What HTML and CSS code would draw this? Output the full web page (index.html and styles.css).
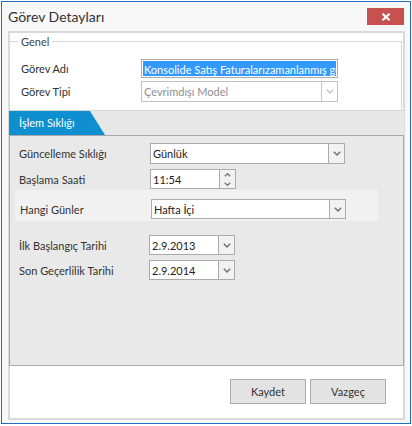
FILE: index.html
```html
<!DOCTYPE html>
<html lang="tr">
<head>
<meta charset="utf-8">
<title>Görev Detayları</title>
<link rel="stylesheet" href="styles.css">
</head>
<body>
<div class="window">
  <div class="titlebar">
    <span class="title">Görev Detayları</span>
    <button class="close" aria-label="Kapat"><svg width="10" height="8" viewBox="0 0 10 8"><path d="M1.5 0.8 L8.5 7.2 M8.5 0.8 L1.5 7.2" stroke="#fff" stroke-width="2.2" fill="none"/></svg></button>
  </div>
  <div class="panel">
    <div class="group">
      <div class="group-title">Genel</div>
      <div class="g-row r-name">
        <label>Görev Adı</label>
        <div class="field text"><span class="sel">Konsolide Satış Faturalarızamanlanmış gönderimi</span></div>
      </div>
      <div class="g-row r-type">
        <label>Görev Tipi</label>
        <div class="field combo disabled"><span class="val">Çevrimdışı Model</span><span class="btn"><svg width="8" height="5" viewBox="0 0 8 5"><path d="M0.8 0.8 L4 4 L7.2 0.8" stroke="#c4c4c4" stroke-width="1.4" fill="none"/></svg></span></div>
      </div>
    </div>
    <div class="tabs">
      <div class="tabstrip"><div class="tab">İşlem Sıklığı</div></div>
      <div class="tabpage">
        <div class="t-row r1">
          <label>Güncelleme Sıklığı</label>
          <div class="field combo wide"><span class="val">Günlük</span><span class="btn"><svg width="8" height="5" viewBox="0 0 8 5"><path d="M0.8 0.8 L4 4 L7.2 0.8" stroke="#6e6e6e" stroke-width="1.4" fill="none"/></svg></span></div>
        </div>
        <div class="t-row r2">
          <label>Başlama Saati</label>
          <div class="field spin short"><span class="val">11:54</span><span class="btn spinbtn"><span class="half"><svg width="7" height="4" viewBox="0 0 7 4"><path d="M0.7 3.3 L3.5 0.7 L6.3 3.3" stroke="#777" stroke-width="1.3" fill="none"/></svg></span><span class="half"><svg width="7" height="4" viewBox="0 0 7 4"><path d="M0.7 0.7 L3.5 3.3 L6.3 0.7" stroke="#777" stroke-width="1.3" fill="none"/></svg></span></span></div>
        </div>
        <div class="t-row band">
          <label>Hangi Günler</label>
          <div class="field combo wide"><span class="val">Hafta İçi</span><span class="btn"><svg width="8" height="5" viewBox="0 0 8 5"><path d="M0.8 0.8 L4 4 L7.2 0.8" stroke="#6e6e6e" stroke-width="1.4" fill="none"/></svg></span></div>
        </div>
        <div class="t-row r4 date">
          <label>İlk Başlangıç Tarihi</label>
          <div class="field combo short"><span class="val">2.9.2013</span><span class="btn"><svg width="8" height="5" viewBox="0 0 8 5"><path d="M0.8 0.8 L4 4 L7.2 0.8" stroke="#6e6e6e" stroke-width="1.4" fill="none"/></svg></span></div>
        </div>
        <div class="t-row r5 date">
          <label>Son Geçerlilik Tarihi</label>
          <div class="field combo short"><span class="val">2.9.2014</span><span class="btn"><svg width="8" height="5" viewBox="0 0 8 5"><path d="M0.8 0.8 L4 4 L7.2 0.8" stroke="#6e6e6e" stroke-width="1.4" fill="none"/></svg></span></div>
        </div>
      </div>
    </div>
    <div class="footer">
      <button class="action">Kaydet</button>
      <button class="action">Vazgeç</button>
    </div>
  </div>
</div>
</body>
</html>
```

FILE: styles.css
```css
* { box-sizing: border-box; }
html, body { margin: 0; padding: 0; }
body {
  background: #ffffff;
  font-family: "Segoe UI", Lato, "Liberation Sans", sans-serif;
  font-size: 11px;
  color: #333333;
  width: 412px;
  height: 426px;
  overflow: hidden;
}
.window {
  width: 410px;
  height: 423px;
  margin: 1px 0 0 1px;
  border: 1px solid #1f6fc0;
  background: #f8f8f8;
  display: flex;
  flex-direction: column;
}
.titlebar {
  height: 29px;
  flex: none;
  display: flex;
  justify-content: space-between;
  align-items: flex-start;
}
.title {
  font-size: 14px;
  line-height: 16px;
  padding: 7px 0 0 6px;
  color: #333333;
}
.close {
  width: 37px;
  height: 17px;
  margin: 6px 6px 0 0;
  border: 0;
  padding: 0;
  background: #c75050;
  display: flex;
  align-items: center;
  justify-content: center;
}
.panel {
  flex: 1;
  margin: 0 5px 3px 6px;
  border: 2px solid #dadada;
  background: #ffffff;
  display: flex;
  flex-direction: column;
}
.group {
  flex: none;
  height: 69px;
  margin: 8px 1px 0 0;
  border-top: 1px solid #d5d5d5;
  border-right: 1px solid #d5d5d5;
}
.group-title {
  width: max-content;
  margin: -7px 0 0 8px;
  padding: 0 3px;
  line-height: 13px;
  background: #ffffff;
  color: #444444;
}
.g-row {
  display: flex;
  align-items: center;
  padding-left: 11px;
}
.g-row label { width: 120px; flex: none; }
.g-row .field { width: 197px; }
.r-name { margin-top: 11px; height: 19px; }
.r-type { margin-top: 3px; height: 21px; }

.field {
  height: 100%;
  border: 1px solid #ababab;
  background: #ffffff;
  display: flex;
  align-items: center;
  color: #222222;
}
.field .val {
  flex: 1;
  padding-left: 2px;
  white-space: nowrap;
  overflow: hidden;
}
.field .btn {
  width: 16px;
  flex: none;
  align-self: stretch;
  border-left: 1px solid #ababab;
  background: #f2f2f2;
  display: flex;
  align-items: center;
  justify-content: center;
}
.field.text { padding: 1px; }
.field .sel {
  display: block;
  width: 100%;
  height: 100%;
  line-height: 17px;
  padding-left: 1px;
  white-space: nowrap;
  overflow: hidden;
  background: #3399ff;
  color: #ffffff;
}
.field.disabled { border-color: #c2c2c2; }
.field.disabled .val { color: #8f8f8f; }
.field.disabled .btn { border-left-color: #c9c9c9; background: #ffffff; }

.tabs {
  flex: none;
  margin: 0 -1px;
  display: flex;
  flex-direction: column;
}
.tabstrip {
  height: 25px;
  background: #e8e8e8;
  border-top: 1px solid #d6d6d6;
}
.tab {
  width: 96px;
  height: 24px;
  padding-left: 10px;
  line-height: 24px;
  background: #0f8fd0;
  color: #ffffff;
  clip-path: polygon(0 0, 81px 0, 100% 100%, 0 100%);
}
.tabpage {
  height: 231px;
  border: 1px solid #a9a9a9;
  background: #e9e9e9;
  padding-top: 7px;
}
.t-row {
  display: flex;
  align-items: center;
  padding-left: 9px;
}
.t-row label { width: 131px; flex: none; }
.t-row.date label { width: 130px; }
.wide { width: 195px; }
.short { width: 86px; }
.r1 { height: 21px; }
.r2 { height: 20px; margin-top: 5px; }
.band {
  height: 31px;
  width: 363px;
  margin: 1px 0 0 5px;
  padding: 9px 0 2px 5px;
  background: #f1f1f1;
}
.r4 { height: 20px; margin-top: 14px; }
.r5 { height: 20px; margin-top: 5px; }
.spinbtn {
  flex-direction: column;
}
.spinbtn .half {
  flex: 1;
  display: flex;
  align-items: center;
  justify-content: center;
}
.footer {
  flex: 1;
  display: flex;
  justify-content: flex-end;
  align-items: flex-start;
  gap: 4px;
  padding: 13px 17px 0 0;
}
.action {
  width: 76px;
  height: 25px;
  border: 1px solid #adadad;
  background: #e3e3e3;
  font-family: inherit;
  font-size: 11px;
  color: #333333;
  padding: 0;
}
```
